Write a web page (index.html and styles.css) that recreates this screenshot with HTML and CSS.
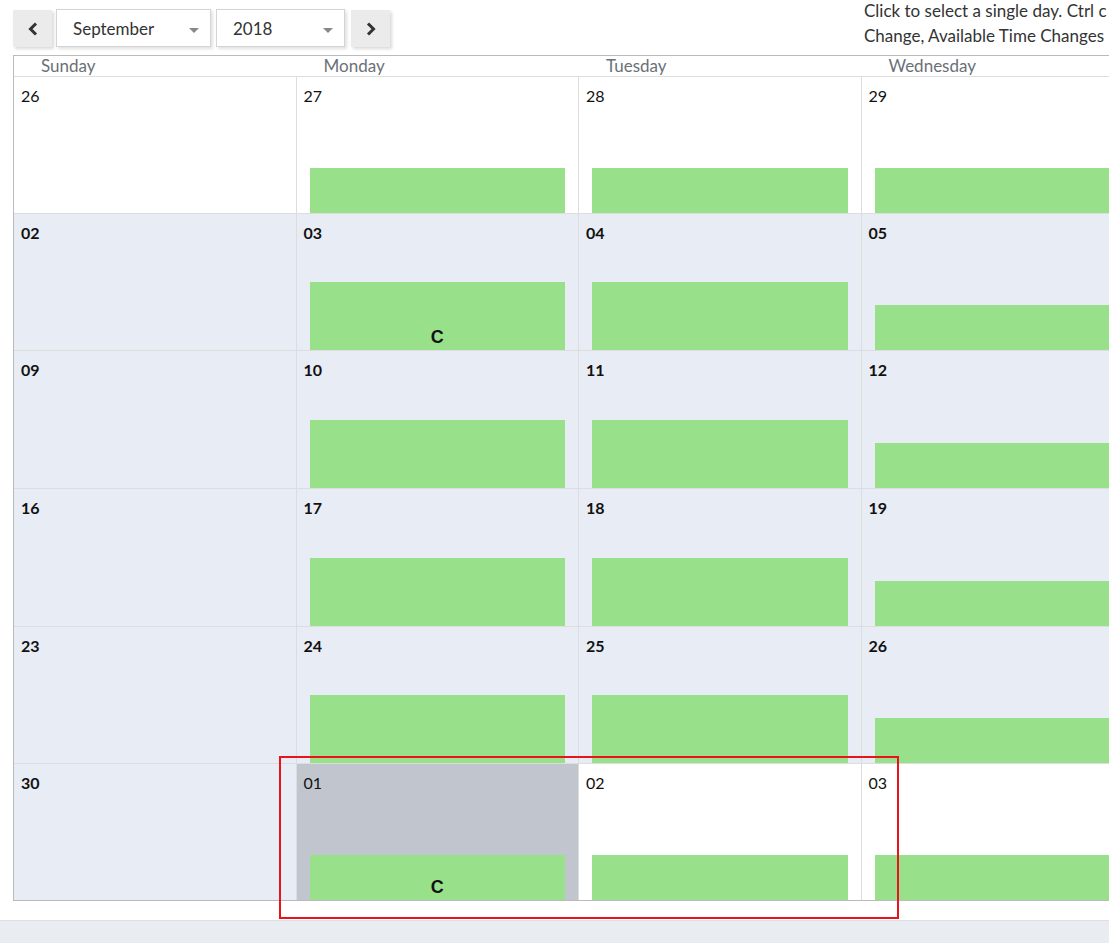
FILE: index.html
```html
<!DOCTYPE html>
<html lang="en">
<head>
    <meta charset="UTF-8">
    <title>Availability Calendar</title>
    <link rel="stylesheet" href="styles.css">
</head>
<body>

    <div class="page">
        <!-- Toolbar -->
        <div class="toolbar">
            <button class="nav-btn" title="Previous month">
                <svg width="12" height="14" viewBox="0 0 12 14"><path d="M9 1.5 L3.5 7 L9 12.5" fill="none" stroke="#333" stroke-width="3"/></svg>
            </button>
            <div class="select month-select">
                <span>September</span>
                <span class="caret"></span>
            </div>
            <div class="select year-select">
                <span>2018</span>
                <span class="caret"></span>
            </div>
            <button class="nav-btn" title="Next month">
                <svg width="12" height="14" viewBox="0 0 12 14"><path d="M3 1.5 L8.5 7 L3 12.5" fill="none" stroke="#333" stroke-width="3"/></svg>
            </button>
            <div class="help-text">
                Click to select a single day. Ctrl c<br>
                Change, Available Time Changes
            </div>
        </div>

        <!-- Calendar -->
        <div class="calendar">
            <div class="weekdays">
                <div class="weekday">Sunday</div>
                <div class="weekday">Monday</div>
                <div class="weekday">Tuesday</div>
                <div class="weekday">Wednesday</div>
            </div>
            <div class="days" id="days"></div>
        </div>
    </div>

    <div class="footer"></div>

    <!-- annotation box -->
    <div class="highlight-box"></div>

    <script>
        // [day, type, bar, label]  type: o = other month, c = current, s = selected
        var weeks = [
            [["26","o",""],["27","o","short"],["28","o","short"],["29","o","short"]],
            [["02","c",""],["03","c","tall","C"],["04","c","tall"],["05","c","short"]],
            [["09","c",""],["10","c","tall"],["11","c","tall"],["12","c","short"]],
            [["16","c",""],["17","c","tall"],["18","c","tall"],["19","c","short"]],
            [["23","c",""],["24","c","tall"],["25","c","tall"],["26","c","short"]],
            [["30","c",""],["01","s","short","C"],["02","o","short"],["03","o","short"]]
        ];

        var container = document.getElementById("days");
        weeks.forEach(function (week) {
            week.forEach(function (d) {
                var cell = document.createElement("div");
                cell.className = "day" + (d[1] === "c" ? " current" : "") + (d[1] === "s" ? " selected" : "");
                var num = document.createElement("div");
                num.className = "day-num";
                num.innerText = d[0];
                cell.appendChild(num);
                if (d[2]) {
                    var bar = document.createElement("div");
                    bar.className = "bar bar-" + d[2];
                    if (d[3]) {
                        bar.innerHTML = '<span class="bar-label">' + d[3] + '</span>';
                    }
                    cell.appendChild(bar);
                }
                container.appendChild(cell);
            });
        });
    </script>
</body>
</html>
```

FILE: styles.css
```css
/* General */
html, body {
    overflow: hidden;
}

body {
    margin: 0;
    padding: 0;
    font-family: Lato, "Open Sans", sans-serif;
    font-size: 16px;
    color: #222;
    background: #fff;
    position: relative;
    height: 943px;
}

.page {
    padding-left: 13px;
    width: 1200px;
}

/* Toolbar */
.toolbar {
    display: flex;
    align-items: flex-start;
    height: 55px;
    font-size: 17px;
}

.nav-btn {
    width: 39px;
    height: 37px;
    margin-top: 10px;
    border: none;
    background: #ebebeb;
    box-shadow: 2px 2px 3px rgba(0, 0, 0, 0.15);
    display: flex;
    align-items: center;
    justify-content: center;
    padding: 0;
    cursor: pointer;
}

.select {
    height: 38px;
    margin-top: 9px;
    box-sizing: border-box;
    border: 1px solid #d4d4d4;
    background: #fff;
    box-shadow: 2px 2px 3px rgba(0, 0, 0, 0.12);
    display: flex;
    align-items: center;
    justify-content: space-between;
    padding: 0 11px 0 16px;
    color: #333;
}

.month-select {
    width: 155px;
    margin-left: 4px;
}

.year-select {
    width: 129px;
    margin-left: 5px;
}

.year-select + .nav-btn {
    margin-left: 6px;
}

.caret {
    width: 0;
    height: 0;
    margin-top: 4px;
    border-left: 5px solid transparent;
    border-right: 5px solid transparent;
    border-top: 5px solid #888;
}

.help-text {
    margin-left: 474px;
    white-space: nowrap;
    line-height: 25px;
    color: #333;
    margin-top: -2px;
}

/* Calendar */
.calendar {
    border-left: 1px solid #bbb;
    border-top: 1px solid #bbb;
    border-bottom: 1px solid #bbb;
}

.weekdays {
    display: grid;
    grid-template-columns: repeat(4, 282.5px);
    height: 20px;
    border-bottom: 1px solid #ddd;
}

.weekday {
    padding-left: 27px;
    color: #6b7078;
    line-height: 20px;
    font-size: 17px;
}

.days {
    display: grid;
    grid-template-columns: repeat(4, 282.5px);
    grid-template-rows: 137px 137px 138px 138px 137px 136px;
}

.day {
    box-sizing: border-box;
    border-right: 1px solid #ddd;
    border-bottom: 1px solid #ddd;
    background: #fff;
    display: flex;
    flex-direction: column;
    overflow: hidden;
    color: #111;
}

.days .day:nth-last-child(-n+4) {
    border-bottom: none;
}

.day.current {
    background: #e8ecf4;
    font-weight: bold;
}

.day.selected {
    background: #c1c5cd;
}

.day-num {
    padding: 8px 0 0 7px;
    line-height: 22px;
}

/* Availability bars */
.bar {
    margin: auto 13px 0 13px;
    background: #98e08a;
    display: flex;
    align-items: flex-end;
    justify-content: center;
}

.bar-short {
    height: 45px;
}

.bar-tall {
    height: 68px;
}

.bar-label {
    font-family: "Liberation Sans", Arial, sans-serif;
    font-weight: bold;
    font-size: 18px;
    line-height: 24px;
    color: #111;
    margin-bottom: 1px;
}

/* Footer */
.footer {
    margin-top: 19px;
    height: 30px;
    background: #e9ecf0;
    border-top: 1px solid #dcdfe3;
}

/* Annotation */
.highlight-box {
    position: absolute;
    left: 279px;
    top: 756px;
    width: 616px;
    height: 159px;
    border: 2px solid #e8141c;
}
```
